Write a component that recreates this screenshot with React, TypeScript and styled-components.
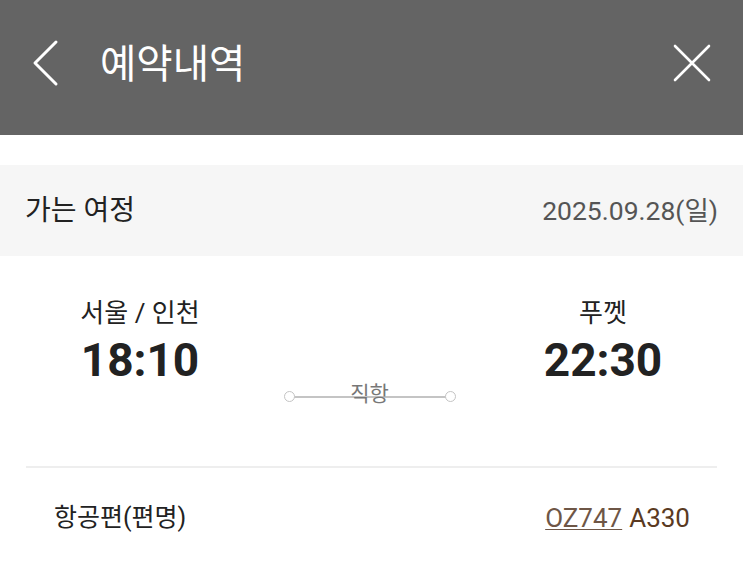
import React from 'react'
import styled, { createGlobalStyle } from 'styled-components'

const GlobalStyle = createGlobalStyle`
  html, body {
    margin: 0;
    padding: 0;
    background: #ffffff;
  }

  body {
    font-family: Roboto, "Noto Sans CJK KR", sans-serif;
    color: #222222;
  }

  * {
    box-sizing: border-box;
  }
`

const Page = styled.div`
  width: 743px;
  min-height: 564px;
  background: #ffffff;
  overflow: hidden;
`

const Header = styled.header`
  height: 135px;
  background: #646464;
  display: flex;
  align-items: center;
  padding: 0 31px 9px 32px;
`

const IconButton = styled.button`
  display: flex;
  align-items: center;
  justify-content: center;
  padding: 0;
  border: 0;
  background: transparent;
  cursor: pointer;
`

const Title = styled.h1`
  flex: 1;
  margin: 4px 0 0 40px;
  font-size: 39.5px;
  font-weight: 400;
  line-height: 44px;
  color: #ffffff;
`

const Gap = styled.div`
  height: 30px;
`

const SectionBar = styled.div`
  height: 91px;
  background: #f6f6f6;
  display: flex;
  align-items: center;
  justify-content: space-between;
  padding: 0 25px;
`

const SectionTitle = styled.span`
  font-size: 28px;
  line-height: 30px;
  color: #222222;
`

const SectionDate = styled.span`
  font-size: 26.5px;
  line-height: 30px;
  color: #555555;
`

const Route = styled.div`
  display: grid;
  grid-template-columns: 166px 1fr 166px;
  padding: 42px 57px 0;
  height: 210px;
`

const Stop = styled.div`
  display: flex;
  flex-direction: column;
  align-items: center;
`

const City = styled.span`
  font-size: 26px;
  line-height: 30px;
  color: #222222;
`

const Time = styled.span`
  margin-top: 6px;
  font-size: 46px;
  font-weight: 700;
  line-height: 52px;
  color: #222222;
`

const Path = styled.div`
  align-self: start;
  margin: 83px 0 0 -4px;
  display: flex;
  justify-content: center;
`

const PathTrack = styled.div`
  position: relative;
  width: 172px;
  height: 30px;
  display: flex;
  justify-content: center;
`

const PathLine = styled.div`
  position: absolute;
  left: 5px;
  right: 5px;
  top: 15px;
  height: 1.5px;
  background: #c4c4c4;
`

const PathDot = styled.span<{ $side: 'left' | 'right' }>`
  position: absolute;
  top: 10px;
  ${(p) => (p.$side === 'left' ? 'left: 0;' : 'right: 0;')}
  width: 11px;
  height: 11px;
  border: 1.5px solid #c4c4c4;
  border-radius: 50%;
  background: #ffffff;
`

const PathLabel = styled.span`
  position: relative;
  font-size: 21px;
  line-height: 30px;
  color: #777777;
  margin-top: -2px;
`

const Divider = styled.hr`
  margin: 0 26px;
  border: 0;
  border-top: 2px solid #eeeeee;
`

const InfoRow = styled.div`
  display: flex;
  align-items: center;
  justify-content: space-between;
  height: 100px;
  padding: 0 53px 0 54px;
`

const InfoLabel = styled.span`
  font-size: 25px;
  line-height: 30px;
  color: #222222;
`

const InfoValue = styled.span`
  font-size: 26px;
  line-height: 30px;
  color: #5a3a22;
`

const FlightLink = styled.a`
  color: #6e5646;
  text-decoration: underline;
  text-decoration-thickness: 1px;
  text-underline-offset: 2px;
  margin-right: 7px;
`

function BackIcon() {
  return (
    <svg width="28" height="48" viewBox="0 0 28 48" fill="none">
      <path d="M24 3 L3 24 L24 45" stroke="#ffffff" strokeWidth="3" strokeLinecap="round" strokeLinejoin="round" />
    </svg>
  )
}

function CloseIcon() {
  return (
    <svg width="40" height="40" viewBox="0 0 40 40" fill="none">
      <path d="M3 3 L37 37 M37 3 L3 37" stroke="#ffffff" strokeWidth="2.6" strokeLinecap="round" />
    </svg>
  )
}

export default function App() {
  return (
    <Page>
      <GlobalStyle />
      <Header>
        <IconButton aria-label="뒤로">
          <BackIcon />
        </IconButton>
        <Title>예약내역</Title>
        <IconButton aria-label="닫기">
          <CloseIcon />
        </IconButton>
      </Header>

      <Gap />

      <SectionBar>
        <SectionTitle>가는 여정</SectionTitle>
        <SectionDate>2025.09.28(일)</SectionDate>
      </SectionBar>

      <Route>
        <Stop>
          <City>서울 / 인천</City>
          <Time>18:10</Time>
        </Stop>
        <Path>
          <PathTrack>
            <PathLine />
            <PathDot $side="left" />
            <PathDot $side="right" />
            <PathLabel>직항</PathLabel>
          </PathTrack>
        </Path>
        <Stop>
          <City>푸껫</City>
          <Time>22:30</Time>
        </Stop>
      </Route>

      <Divider />

      <InfoRow>
        <InfoLabel>항공편(편명)</InfoLabel>
        <InfoValue>
          <FlightLink href="#">OZ747</FlightLink>A330
        </InfoValue>
      </InfoRow>
    </Page>
  )
}
